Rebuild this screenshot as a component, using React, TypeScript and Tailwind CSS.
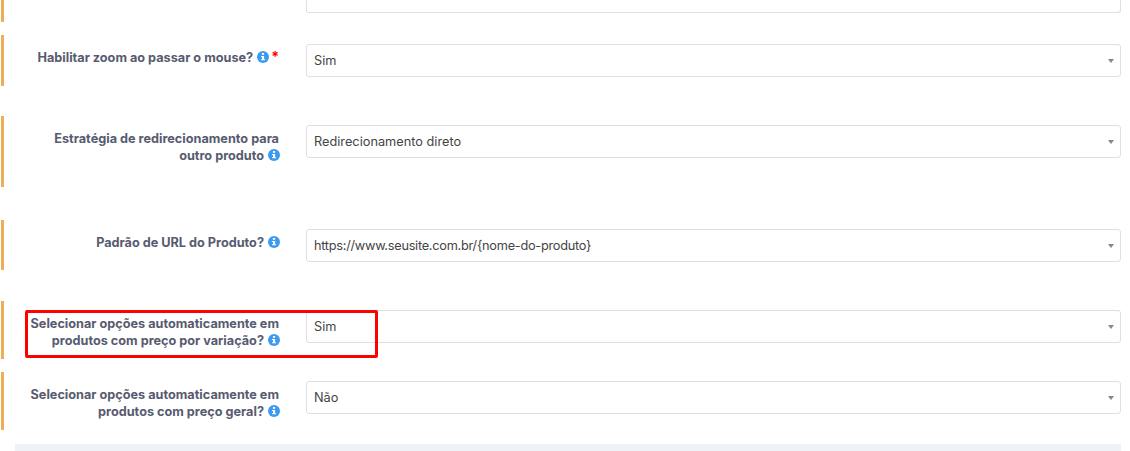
import type { ReactNode } from 'react';

function InfoIcon() {
  return (
    <svg viewBox="0 0 12 12" className="inline-block w-3 h-3 align-[-1px] ml-[4px] -mr-px">
      <circle cx="6" cy="6" r="6" fill="#3b9bf0" />
      <rect x="4.9" y="2" width="2.2" height="1.8" fill="#fff" />
      <path d="M4 4.9h3.1v3.3h1v1.1H4V8.200h1V6H4z" fill="#fff" />
    </svg>
  );
}

function Select({ value, className }: { value: string; className?: string }) {
  return (
    <div className="flex items-center justify-between h-[33px] pl-[7px] pr-[6px] bg-white border border-[#dfdfdf] rounded-[3px] text-[12.75px] text-[#444]">
      <span className={className}>{value}</span>
      <span className="border-x-[3px] border-t-[4px] border-x-transparent border-t-[#888]" />
    </div>
  );
}

function Row({ label, value, height, mb, required, valueClass }: { label: ReactNode; value: string; height: string; mb: string; required?: boolean; valueClass?: string }) {
  return (
    <div className={`flex ml-px border-l-[3px] border-[#ecae57] ${height} ${mb}`}>
      <div className="w-[275px] pt-[15px] text-right text-[12.7px] leading-[16.5px] font-bold text-[#575b70]">
        {label}
        {required && <span className="text-[#f00] text-[14px] leading-[12px] font-bold ml-[3px]">*</span>}
      </div>
      <div className="ml-[27px] mt-[9px] w-[815px]">
        <Select value={value} className={valueClass} />
      </div>
    </div>
  );
}

export default function App() {
  return (
    <div className="relative h-[451px] w-[1130px] overflow-hidden bg-white font-['Inter',sans-serif]">
      <div className="flex ml-px h-[22px] mb-[13px] border-l-[3px] border-[#ecae57]">
        <div className="ml-[302px] w-[815px] h-[13px] bg-white border-x border-b border-[#dfdfdf] rounded-b-[3px]" />
      </div>
      <Row
        height="h-[51px]"
        mb="mb-[30px]"
        value="Sim"
        required
        label={<>Habilitar zoom ao passar o mouse?<InfoIcon /></>}
      />
      <Row
        height="h-[71px]"
        mb="mb-[33px]"
        value="Redirecionamento direto"
        label={<>Estratégia de redirecionamento para<br />outro produto<InfoIcon /></>}
      />
      <Row
        height="h-[50px]"
        mb="mb-[31px]"
        value="https://www.seusite.com.br/{nome-do-produto}"
        valueClass="tracking-[-0.27px]"
        label={<>Padrão de URL do Produto?<InfoIcon /></>}
      />
      <Row
        height="h-[58px]"
        mb="mb-[13px]"
        value="Sim"
        label={<>Selecionar opções automaticamente em<br />produtos com preço por variação?<InfoIcon /></>}
      />
      <Row
        height="h-[58px]"
        mb="mb-[14px]"
        value="Não"
        label={<>Selecionar opções automaticamente em<br />produtos com preço geral?<InfoIcon /></>}
      />
      <div className="ml-[15px] mr-[9px] h-[7px] bg-[#eff3f7]" />
      {/* marcação vermelha */}
      <div className="absolute left-[25px] top-[310px] w-[353px] h-[48px] border-[3px] border-[#f00] rounded-[2px]" />
    </div>
  );
}
